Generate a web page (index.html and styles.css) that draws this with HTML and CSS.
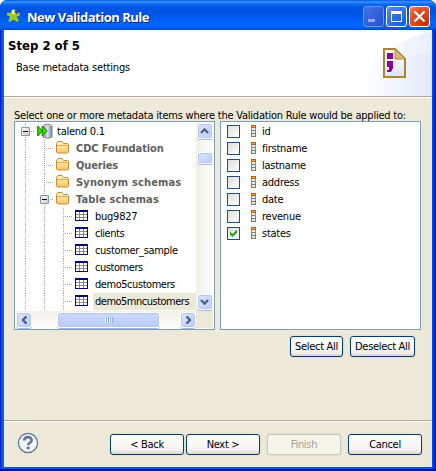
FILE: index.html
```html
<!DOCTYPE html>
<html lang="en">
<head>
<meta charset="utf-8">
<title>New Validation Rule</title>
<link rel="stylesheet" href="styles.css">
</head>
<body>
<svg width="0" height="0" class="defs" aria-hidden="true">
  <defs>
    <linearGradient id="gFolder" x1="0" y1="0" x2="0" y2="1"><stop offset="0" stop-color="#fff6cf"/><stop offset="1" stop-color="#fbc567"/></linearGradient>
    <linearGradient id="gDb"><stop offset="0" stop-color="#8595bd"/><stop offset=".5" stop-color="#d5def2"/><stop offset="1" stop-color="#7485b2"/></linearGradient>
    <linearGradient id="gPage" x1="0" y1="0" x2="0" y2="1"><stop offset="0" stop-color="#fff"/><stop offset="1" stop-color="#dce6f5"/></linearGradient>
    <linearGradient id="gSwoosh"><stop offset="0" stop-color="#fff"/><stop offset="1" stop-color="#dfe7f8"/></linearGradient>
    <symbol id="folder" viewBox="0 0 16 16">
      <path d="M.5 12V3.500L2 1.500h4l1.500 2h4l1 1V12l-1 1h-10z" fill="url(#gFolder)" stroke="#c98a32"/>
      <path d="M1 5.500h11" stroke="#e4ad55"/>
    </symbol>
    <symbol id="table" viewBox="0 0 16 16" shape-rendering="crispEdges">
      <path d="M0 2h13v11H0z" fill="#000080"/><path d="M1 4h11v8H1z" fill="#fff"/>
      <path d="M1 6h11v1H1zM1 9h11v1H1zM4 4h1v8H4zM8 4h1v8H8z" fill="#8b8b8b"/>
    </symbol>
    <symbol id="column" viewBox="0 0 5 12" shape-rendering="crispEdges">
      <path d="M0 0h5v12H0z" fill="#8a7b50"/><path d="M0 0h5v3H0z" fill="#c45a0b"/><path d="M1 1h3v1H1z" fill="#ffae35"/>
      <path d="M0 3h1v4H0zM4 3h1v4H4z" fill="#c08a36"/>
      <path d="M1 3h3v2H1zM1 6h3v2H1zM1 9h3v2H1z" fill="#dff0f5"/>
    </symbol>
    <symbol id="chevron" viewBox="0 0 9 6"><path d="M.9 5L4.5 1.4 8.1 5" fill="none" stroke="#4d6185" stroke-width="2.3"/></symbol>
  </defs>
</svg>

<div class="window">
  <header class="titlebar">
    <svg class="app-icon" viewBox="0 0 16 16">
      <path d="M1 6l4-.5L6 2.500h3l1 3 4 .5-.5 3L10.500 9.500l2.500 4-2 1.500-3.500-2.500L4 15l-1.500-1.500L4 9.500 1 8.500z" fill="#a2c91c"/>
      <path d="M6 3h3l.5 3-2 1.500L6 6z" fill="#f4f6b1"/>
      <path d="M8.500 4l2 2L14 1" fill="none" stroke="#4338b5" stroke-width="1.500"/>
    </svg>
    <h1>New Validation Rule</h1>
    <div class="controls">
      <span class="ctl dim"><svg viewBox="0 0 21 21"><path d="M5 13h7v3H5z" fill="#91aaf0"/></svg></span>
      <span class="ctl"><svg viewBox="0 0 21 21" shape-rendering="crispEdges"><path d="M5 5h11v11H5zM6 8v7h9V8z" fill="#fff" fill-rule="evenodd"/></svg></span>
      <span class="ctl close"><svg viewBox="0 0 21 21"><path d="M5.5 5.5l10 10m0-10l-10 10" stroke="#fff" stroke-width="2.2"/></svg></span>
    </div>
  </header>

  <main class="client">
    <section class="banner">
      <div class="banner-text">
        <h2>Step 2 of 5</h2>
        <p>Base metadata settings</p>
      </div>
      <svg class="banner-art" viewBox="0 0 90 66">
        <path d="M16 66C28 28 58 8 90 1v65z" fill="url(#gSwoosh)" opacity=".7"/>
        <path d="M24 66C40 38 62 24 90 22v44z" fill="url(#gSwoosh)" opacity=".75"/>
        <path d="M42 19h11l10 10v18H42z" fill="url(#gPage)" stroke="#aa8431" stroke-width="2"/>
        <path d="M53 19v10h10z" fill="#d9b76c" stroke="#b08c3c"/>
        <path d="M45 23h6v6h-6zM45 31h6v8h-1v2h-1v1h-4v-2h2v-3h-2z" fill="#90009c" shape-rendering="crispEdges"/>
      </svg>
    </section>

    <section class="content">
      <p class="prompt">Select one or more metadata items where the Validation Rule would be applied to:</p>
      <div class="panes">
        <div class="pane tree">
          <div class="rows">
            <div class="row"><i class="g tee"><b class="box"></b></i><svg class="ico" viewBox="0 0 16 16"><path d="M6 2.500Q10.500 -.5 15 2.500v11.500Q10.500 16.500 6 14z" fill="url(#gDb)" stroke="#8b7c77"/><path d="M6.500 2.500Q10.500 4 14.500 2.500" fill="none" stroke="#e9d6a6"/><path d="M.7 3l5 5-5 5zM5.200 3l5 5-5 5z" fill="#43d000" stroke="#118400"/></svg><span class="lbl root">talend 0.1</span></div>
            <div class="row"><i class="g"></i><i class="g tee"></i><svg class="ico"><use href="#folder"/></svg><span class="lbl cat first">CDC Foundation</span></div>
            <div class="row"><i class="g"></i><i class="g tee"></i><svg class="ico"><use href="#folder"/></svg><span class="lbl cat">Queries</span></div>
            <div class="row"><i class="g"></i><i class="g tee"></i><svg class="ico"><use href="#folder"/></svg><span class="lbl cat wide">Synonym schemas</span></div>
            <div class="row"><i class="g"></i><i class="g tee"><b class="box"></b></i><svg class="ico"><use href="#folder"/></svg><span class="lbl cat wide">Table schemas</span></div>
            <div class="row"><i class="g"></i><i class="g"></i><i class="g tee"></i><svg class="ico"><use href="#table"/></svg><span class="lbl root">bug9827</span></div>
            <div class="row"><i class="g"></i><i class="g"></i><i class="g tee"></i><svg class="ico"><use href="#table"/></svg><span class="lbl">clients</span></div>
            <div class="row"><i class="g"></i><i class="g"></i><i class="g tee"></i><svg class="ico"><use href="#table"/></svg><span class="lbl sample">customer_sample</span></div>
            <div class="row"><i class="g"></i><i class="g"></i><i class="g tee"></i><svg class="ico"><use href="#table"/></svg><span class="lbl">customers</span></div>
            <div class="row"><i class="g"></i><i class="g"></i><i class="g tee"></i><svg class="ico"><use href="#table"/></svg><span class="lbl">demo5customers</span></div>
            <div class="row"><i class="g"></i><i class="g"></i><i class="g tee"></i><svg class="ico"><use href="#table"/></svg><span class="lbl selected">demo5mncustomers</span></div>
          </div>
          <div class="vbar">
            <span class="sb"><svg class="chev"><use href="#chevron"/></svg></span>
            <span class="sb vthumb"></span>
            <span class="sb end"><svg class="chev down"><use href="#chevron"/></svg></span>
          </div>
          <div class="hbar">
            <span class="sb"><svg class="chev left"><use href="#chevron"/></svg></span>
            <span class="sb hthumb"><i class="grip"></i></span>
            <span class="sb end"><svg class="chev right"><use href="#chevron"/></svg></span>
          </div>
          <div class="corner"></div>
        </div>

        <div class="pane list">
          <div class="item"><span class="check"></span><svg class="col"><use href="#column"/></svg><span>id</span></div>
          <div class="item"><span class="check"></span><svg class="col"><use href="#column"/></svg><span>firstname</span></div>
          <div class="item"><span class="check"></span><svg class="col"><use href="#column"/></svg><span>lastname</span></div>
          <div class="item"><span class="check"></span><svg class="col"><use href="#column"/></svg><span>address</span></div>
          <div class="item"><span class="check"></span><svg class="col"><use href="#column"/></svg><span>date</span></div>
          <div class="item"><span class="check"></span><svg class="col"><use href="#column"/></svg><span>revenue</span></div>
          <div class="item"><span class="check"><svg viewBox="0 0 11 11"><path d="M2 3.500v3L4.500 9 9 4.500v-3L4.500 6z" fill="#21a121"/></svg></span><svg class="col"><use href="#column"/></svg><span>states</span></div>
        </div>
      </div>
      <div class="bulk">
        <button class="btn select">Select All</button>
        <button class="btn deselect">Deselect All</button>
      </div>
    </section>

    <footer class="footer">
      <svg class="help" viewBox="0 0 22 22">
        <circle cx="11" cy="11" r="9.600" fill="#f2f3f4" stroke="#61779b" stroke-width="1.300"/>
        <path d="M7.300 8.500C7.300 4 14.600 4 14.600 8.200c0 2.600-3.400 2.500-3.400 5" fill="none" stroke="#61779b" stroke-width="2.600"/>
        <path d="M9.700 14.700h3v2.600h-3z" fill="#61779b"/>
      </svg>
      <button class="btn nav">&lt; Back</button>
      <button class="btn nav next">Next &gt;</button>
      <button class="btn nav finish" disabled>Finish</button>
      <button class="btn nav cancel">Cancel</button>
    </footer>
  </main>
</div>
</body>
</html>
```
FILE: styles.css
```css
* { box-sizing: border-box; }
body { margin: 0; background: #fff; font: 11px/17px "DejaVu Sans Condensed", "DejaVu Sans", sans-serif; font-stretch: condensed; color: #000; letter-spacing: -0.25px; overflow: hidden; }
.defs { position: absolute; }
h1, h2, p { margin: 0; }
svg { display: block; flex: none; }
.window { width: 436px; height: 471px; display: flex; flex-direction: column; padding: 0 4px 2px; border-radius: 7px 7px 0 0; background: linear-gradient(90deg, #0019b5 0, #0831d9 1px, #166aee 3px, #0855dd 4px, #0855dd 432px, #0046f0 433px, #0030d5 434px, #00108f 436px); border-bottom: 2px solid #00138c; overflow: hidden; }
.titlebar { height: 30px; flex: none; margin: 0 -4px; padding: 3px 6px 0 14px; display: flex; align-items: center; background: linear-gradient(#0058e6 0, #3a93ff 2px, #0a6bf3 4px, #0054e3 8px, #0055e5 14px, #0062fa 21px, #0066ff 25px, #005cf0 28px, #0041c8 30px); }
.app-icon { width: 16px; height: 16px; margin: -3px 1px 0 -8px; }
.titlebar h1 { margin-left: 4px; font: bold 13px/24px "Open Sans", sans-serif; color: #fff; letter-spacing: -0.5px; text-shadow: 1px 1px #0a1883; white-space: nowrap; }
.controls { margin-left: auto; display: flex; gap: 2px; }
.ctl { width: 21px; height: 21px; border: 1px solid #fff; border-radius: 3px; background: radial-gradient(circle at 80% 85%, #0a63ea, #3a70e8 60%, #668df0); }
.ctl svg { width: 21px; height: 21px; margin: -1px; }
.ctl.dim { border-color: #6c93ef; background: linear-gradient(135deg, #4173e6, #2353cf); }
.ctl.close { background: radial-gradient(circle at 80% 85%, #c53005, #e04b22 60%, #ee8467); }
.client { flex: 1; display: flex; flex-direction: column; background: #ece9d8; }
.banner { height: 66px; flex: none; display: flex; justify-content: space-between; background: #fff; }
.banner-text { padding: 7px 0 0 4px; }
.banner h2 { font: bold 13px/17px "DejaVu Sans Condensed", sans-serif; font-stretch: condensed; letter-spacing: 0; }
.banner p { margin: 5px 0 0 8px; letter-spacing: -0.17px; }
.banner-art { width: 90px; height: 66px; }
.content { flex: 1; border-top: 1px solid #aca899; box-shadow: inset 0 1px #fff; padding: 10px 11px 0 10px; }
.prompt { height: 14px; line-height: 17px; white-space: nowrap; letter-spacing: -0.22px; }
.panes { display: flex; gap: 5px; }
.pane { width: 201px; height: 209px; border: 1px solid #7f9db9; background: #fff; }
.tree { display: grid; grid-template: 188px 17px / 180px 17px; padding: 1px; }
.rows { overflow: hidden; }
.row { display: flex; height: 17px; }
.g { width: 19px; height: 17px; flex: none; display: flex; align-items: center; background: repeating-linear-gradient(#aca899 0 1px, transparent 1px 2px) 9px 0 / 1px 17px no-repeat; }
.g.tee { background: repeating-linear-gradient(#aca899 0 1px, transparent 1px 2px) 9px 0 / 1px 17px no-repeat, repeating-linear-gradient(90deg, #aca899 0 1px, transparent 1px 2px) 9px 8px / 10px 1px no-repeat; }
.box { width: 9px; height: 9px; margin-left: 5px; border: 1px solid #7898b5; border-radius: 1px; background: linear-gradient(#000, #000) 1px 3px / 5px 1px no-repeat, linear-gradient(135deg, #fff, #cfc9bb); }
.ico { width: 16px; height: 16px; margin-left: 2px; }
.lbl { margin-left: 2px; padding: 0 5px 0 2px; white-space: nowrap; letter-spacing: -0.45px; }
.lbl.root { letter-spacing: -0.25px; }
.lbl.sample { letter-spacing: -0.32px; }
.lbl.cat { font-weight: bold; color: #5f5f5f; letter-spacing: -0.15px; }
.lbl.cat.first { letter-spacing: -0.1px; }
.lbl.cat.wide { letter-spacing: 0.15px; }
.lbl.selected { padding-right: 8px; background: #ece9d8; letter-spacing: -0.5px; }
.vbar { display: flex; flex-direction: column; align-items: center; background: linear-gradient(90deg, #f1efe6, #fefefb); padding-bottom: 1px; }
.hbar { display: flex; align-items: center; background: linear-gradient(#f1efe6, #fefefb); }
.corner { background: #ece9d8; }
.sb { width: 16px; height: 16px; flex: none; display: flex; align-items: center; justify-content: center; border: 1px solid #fff; border-radius: 3px; background: linear-gradient(135deg, #dce6ff, #b9cbf9); box-shadow: inset 0 0 0 1px #b5c8f5, 0 1px #a3b8e4; }
.vthumb { height: 12px; margin-top: 13px; }
.vbar .end { margin-top: auto; }
.hthumb { width: 103px; margin-left: 25px; background: linear-gradient(#cbdafe, #b9cbf9); }
.hbar .end { margin-left: auto; }
.chev { width: 9px; height: 6px; }
.down { transform: rotate(180deg); }
.left { transform: rotate(-90deg); }
.right { transform: rotate(90deg); }
.grip { width: 8px; height: 6px; background: repeating-linear-gradient(90deg, #eef4fe 0 1px, #8cb0f8 1px 2px); }
.list { padding: 1px 6px; }
.item { display: flex; align-items: center; height: 17px; }
.check { width: 13px; height: 13px; border: 1px solid #1c5180; background: linear-gradient(135deg, #dcdcd7, #fff); }
.check svg { width: 11px; height: 11px; }
.col { width: 5px; height: 12px; margin: 0 6px 1px 11px; }
.bulk { display: flex; justify-content: flex-end; gap: 7px; padding: 6px 6px 0 0; }
.btn { height: 21px; padding: 0; border: 1px solid #003c74; border-radius: 3px; background: linear-gradient(#fff, #f3f2ee 80%, #dbd5c9); font: inherit; line-height: 18px; color: #000; letter-spacing: -0.3px; box-shadow: 0 0 0 1px #e4e1d1; white-space: nowrap; }
.select { width: 53px; }
.deselect { width: 65px; }
.footer { height: 47px; flex: none; display: flex; border-top: 1px solid #aca899; box-shadow: inset 0 1px #fff; padding: 13px 10px 0 13px; }
.help { width: 22px; height: 22px; margin: -2px 71px 0 0; }
.nav { width: 74px; }
.next { margin-left: 2px; }
.finish { margin-left: 7px; border-color: #c9c7ba; background: #f5f4ea; color: #a1a192; }
.cancel { margin-left: 7px; }
```
